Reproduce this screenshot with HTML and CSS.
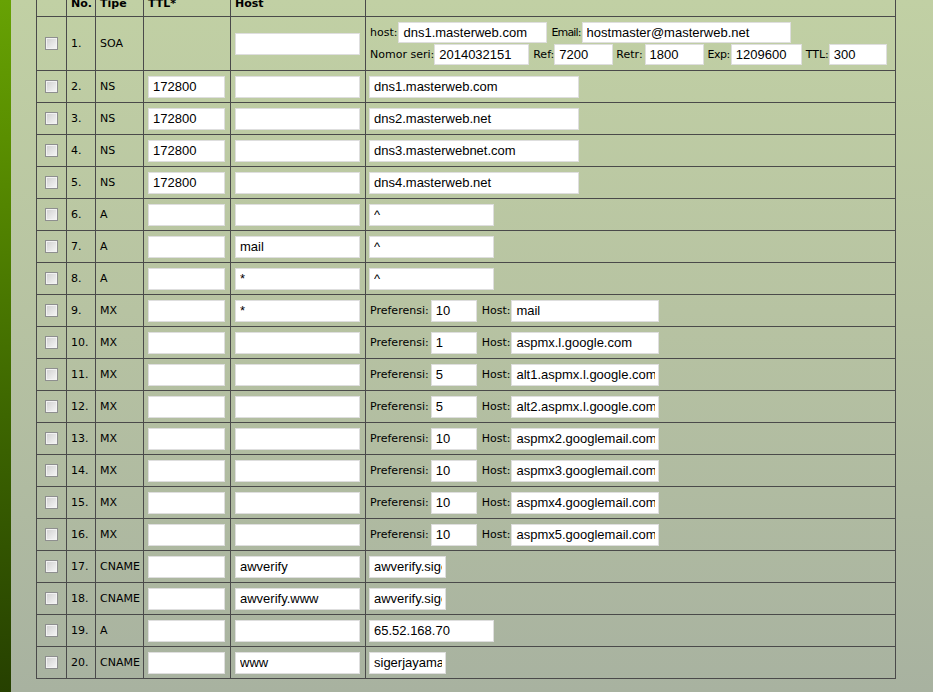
FILE: index.html
```html
<!DOCTYPE html>
<html>
<head>
<meta charset="utf-8">
<link rel="stylesheet" href="styles.css">
</head>
<body>
<div class="side"></div>
<div class="main">
  <div class="grid">
    <div class="c h"></div><div class="c h">No.</div><div class="c h">Tipe</div><div class="c h">TTL*</div><div class="c h">Host</div><div class="c h"></div>

    <div class="c cb"><input type="checkbox" class="chk"></div><div class="c">1.</div><div class="c">SOA</div><div class="c"></div><div class="c"><input class="in w125" value=""></div>
    <div class="c v soa">
      <div class="line"><span class="lb first gap1">host:</span><input class="in s w149" value="dns1.masterweb.com"><span class="lb tight">Email:</span><input class="in s w209" value="hostmaster@masterweb.net"></div>
      <div class="line"><span class="lb first">Nomor seri:</span><input class="in s w95" value="2014032151"><span class="lb">Ref:</span><input class="in s w59" value="7200"><span class="lb narrow">Retr:</span><input class="in s w59" value="1800"><span class="lb semi">Exp:</span><input class="in s w71" value="1209600"><span class="lb">TTL:</span><input class="in s w58" value="300"></div>
    </div>

    <div class="c cb"><input type="checkbox" class="chk"></div><div class="c">2.</div><div class="c">NS</div><div class="c"><input class="in w77" value="172800"></div><div class="c"><input class="in w125" value=""></div><div class="c v"><input class="in w210" value="dns1.masterweb.com"></div>
    <div class="c cb"><input type="checkbox" class="chk"></div><div class="c">3.</div><div class="c">NS</div><div class="c"><input class="in w77" value="172800"></div><div class="c"><input class="in w125" value=""></div><div class="c v"><input class="in w210" value="dns2.masterweb.net"></div>
    <div class="c cb"><input type="checkbox" class="chk"></div><div class="c">4.</div><div class="c">NS</div><div class="c"><input class="in w77" value="172800"></div><div class="c"><input class="in w125" value=""></div><div class="c v"><input class="in w210" value="dns3.masterwebnet.com"></div>
    <div class="c cb"><input type="checkbox" class="chk"></div><div class="c">5.</div><div class="c">NS</div><div class="c"><input class="in w77" value="172800"></div><div class="c"><input class="in w125" value=""></div><div class="c v"><input class="in w210" value="dns4.masterweb.net"></div>

    <div class="c cb"><input type="checkbox" class="chk"></div><div class="c">6.</div><div class="c">A</div><div class="c"><input class="in w77" value=""></div><div class="c"><input class="in w125" value=""></div><div class="c v"><input class="in w125" value="^"></div>
    <div class="c cb"><input type="checkbox" class="chk"></div><div class="c">7.</div><div class="c">A</div><div class="c"><input class="in w77" value=""></div><div class="c"><input class="in w125" value="mail"></div><div class="c v"><input class="in w125" value="^"></div>
    <div class="c cb"><input type="checkbox" class="chk"></div><div class="c">8.</div><div class="c">A</div><div class="c"><input class="in w77" value=""></div><div class="c"><input class="in w125" value="*"></div><div class="c v"><input class="in w125" value="^"></div>

    <div class="c cb"><input type="checkbox" class="chk"></div><div class="c">9.</div><div class="c">MX</div><div class="c"><input class="in w77" value=""></div><div class="c"><input class="in w125" value="*"></div><div class="c v"><span class="lb pref">Preferensi:</span><input class="in w46" value="10"><span class="lb mxh">Host:</span><input class="in w148" value="mail"></div>
    <div class="c cb"><input type="checkbox" class="chk"></div><div class="c">10.</div><div class="c">MX</div><div class="c"><input class="in w77" value=""></div><div class="c"><input class="in w125" value=""></div><div class="c v"><span class="lb pref">Preferensi:</span><input class="in w46" value="1"><span class="lb mxh">Host:</span><input class="in w148" value="aspmx.l.google.com"></div>
    <div class="c cb"><input type="checkbox" class="chk"></div><div class="c">11.</div><div class="c">MX</div><div class="c"><input class="in w77" value=""></div><div class="c"><input class="in w125" value=""></div><div class="c v"><span class="lb pref">Preferensi:</span><input class="in w46" value="5"><span class="lb mxh">Host:</span><input class="in w148" value="alt1.aspmx.l.google.com"></div>
    <div class="c cb"><input type="checkbox" class="chk"></div><div class="c">12.</div><div class="c">MX</div><div class="c"><input class="in w77" value=""></div><div class="c"><input class="in w125" value=""></div><div class="c v"><span class="lb pref">Preferensi:</span><input class="in w46" value="5"><span class="lb mxh">Host:</span><input class="in w148" value="alt2.aspmx.l.google.com"></div>
    <div class="c cb"><input type="checkbox" class="chk"></div><div class="c">13.</div><div class="c">MX</div><div class="c"><input class="in w77" value=""></div><div class="c"><input class="in w125" value=""></div><div class="c v"><span class="lb pref">Preferensi:</span><input class="in w46" value="10"><span class="lb mxh">Host:</span><input class="in w148" value="aspmx2.googlemail.com"></div>
    <div class="c cb"><input type="checkbox" class="chk"></div><div class="c">14.</div><div class="c">MX</div><div class="c"><input class="in w77" value=""></div><div class="c"><input class="in w125" value=""></div><div class="c v"><span class="lb pref">Preferensi:</span><input class="in w46" value="10"><span class="lb mxh">Host:</span><input class="in w148" value="aspmx3.googlemail.com"></div>
    <div class="c cb"><input type="checkbox" class="chk"></div><div class="c">15.</div><div class="c">MX</div><div class="c"><input class="in w77" value=""></div><div class="c"><input class="in w125" value=""></div><div class="c v"><span class="lb pref">Preferensi:</span><input class="in w46" value="10"><span class="lb mxh">Host:</span><input class="in w148" value="aspmx4.googlemail.com"></div>
    <div class="c cb"><input type="checkbox" class="chk"></div><div class="c">16.</div><div class="c">MX</div><div class="c"><input class="in w77" value=""></div><div class="c"><input class="in w125" value=""></div><div class="c v"><span class="lb pref">Preferensi:</span><input class="in w46" value="10"><span class="lb mxh">Host:</span><input class="in w148" value="aspmx5.googlemail.com"></div>

    <div class="c cb"><input type="checkbox" class="chk"></div><div class="c">17.</div><div class="c">CNAME</div><div class="c"><input class="in w77" value=""></div><div class="c"><input class="in w125" value="awverify"></div><div class="c v"><input class="in w77" value="awverify.sigerjayamas.com"></div>
    <div class="c cb"><input type="checkbox" class="chk"></div><div class="c">18.</div><div class="c">CNAME</div><div class="c"><input class="in w77" value=""></div><div class="c"><input class="in w125" value="awverify.www"></div><div class="c v"><input class="in w77" value="awverify.sigerjayamas.com"></div>
    <div class="c cb"><input type="checkbox" class="chk"></div><div class="c">19.</div><div class="c">A</div><div class="c"><input class="in w77" value=""></div><div class="c"><input class="in w125" value=""></div><div class="c v"><input class="in w125" value="65.52.168.70"></div>
    <div class="c cb"><input type="checkbox" class="chk"></div><div class="c">20.</div><div class="c">CNAME</div><div class="c"><input class="in w77" value=""></div><div class="c"><input class="in w125" value="www"></div><div class="c v"><input class="in w77" value="sigerjayamas.com"></div>
  </div>
</div>
</body>
</html>
```

FILE: styles.css
```css
html, body {
  margin: 0;
  padding: 0;
  height: 692px;
  overflow: hidden;
}
body {
  display: flex;
  font-family: "DejaVu Sans", Verdana, sans-serif;
  font-size: 11px;
  color: #000;
}
.side {
  width: 11px;
  flex: none;
  background: linear-gradient(to bottom, #67a204, #5a8f00 20%, #3d6600 60%, #264000);
}
.main {
  flex: 1;
  background: linear-gradient(to bottom, #c1d0a4, #b7c3a2 45%, #a8b2a0);
  padding-left: 25px;
}
.grid {
  display: grid;
  grid-template-columns: 30px 29px 48px 87px 135px 530px;
  grid-template-rows: 27px 54px repeat(19, 32px);
  width: 860px;
  margin-top: -10px;
  border-left: 1px solid #4a4a4a;
}
.c {
  box-sizing: border-box;
  border-right: 1px solid #4a4a4a;
  border-bottom: 1px solid #4a4a4a;
  display: flex;
  align-items: center;
  padding-left: 4px;
  white-space: nowrap;
  overflow: hidden;
}
.h {
  font-weight: bold;
}
.cb {
  padding-left: 0;
  justify-content: center;
}
.v {
  padding-left: 3px;
}
.soa {
  flex-direction: column;
  align-items: flex-start;
  justify-content: center;
  gap: 1px;
}
.line {
  display: flex;
  align-items: center;
  height: 21px;
}
.lb {
  margin-left: 4px;
  margin-right: 0;
}
.lb.first {
  margin-left: 1px;
}
.lb.gap1 {
  margin-right: 1px;
}
.lb.tight {
  letter-spacing: -0.85px;
  margin-right: 1px;
}
.lb.narrow {
  margin-left: 3px;
  margin-right: 2px;
}
.lb.semi {
  letter-spacing: -0.5px;
  margin-right: 1px;
}
.lb.pref {
  margin-left: 1px;
  margin-right: 2px;
}
.lb.mxh {
  margin-left: 5px;
  margin-right: 1px;
}
.chk {
  appearance: none;
  -webkit-appearance: none;
  margin: 0;
  width: 13px;
  height: 13px;
  box-sizing: border-box;
  border: 1px solid #8e8f8f;
  box-shadow: inset 0 0 0 1px #f2f2f2;
  background: linear-gradient(135deg, #cfcfcf, #f7f7f7);
}
.in {
  box-sizing: border-box;
  height: 22px;
  margin: 0;
  border: 1px solid #dedede;
  background: #fff;
  padding: 0 3px 0 4px;
  font-family: "Liberation Sans", Arial, sans-serif;
  font-size: 13px;
  color: #000;
  outline: none;
}
.in.s { height: 21px; }
.w46 { width: 46px; }
.w58 { width: 58px; }
.w59 { width: 59px; }
.w71 { width: 71px; }
.w77 { width: 77px; }
.w95 { width: 95px; }
.w125 { width: 125px; }
.w148 { width: 148px; }
.w149 { width: 149px; }
.w209 { width: 209px; }
.w210 { width: 210px; }
```
